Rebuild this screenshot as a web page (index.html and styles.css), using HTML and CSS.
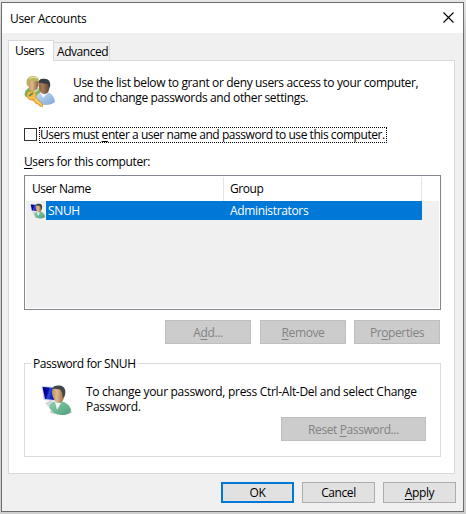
FILE: index.html
```
<!DOCTYPE html>
<html lang="en">
<head>
    <meta charset="UTF-8">
    <meta name="viewport" content="width=device-width, initial-scale=1.0">
    <title>User Accounts</title>
    <link rel="stylesheet" href="styles.css">
</head>
<body>
    <svg class="defs">
        <defs>
            <linearGradient id="skin" x1="0" x2="1"><stop offset="0" stop-color="#c08d5e"/><stop offset=".4" stop-color="#dfb98c"/><stop offset="1" stop-color="#87603c"/></linearGradient>
            <linearGradient id="skinDark" x1="0" x2="1"><stop offset="0" stop-color="#8a6347"/><stop offset=".4" stop-color="#a67c5a"/><stop offset="1" stop-color="#5d4231"/></linearGradient>
            <linearGradient id="green" x1="0" x2="1" y1="0" y2="1"><stop offset="0" stop-color="#8fd0b0"/><stop offset=".6" stop-color="#66b48f"/><stop offset="1" stop-color="#4a9e79"/></linearGradient>
            <linearGradient id="blue" x1="0" x2="1" y1="0" y2="1"><stop offset="0" stop-color="#c3dcf1"/><stop offset="1" stop-color="#7faadb"/></linearGradient>
            <linearGradient id="screen" x1="0" x2="1" y1="0" y2=".3"><stop offset="0" stop-color="#020290"/><stop offset=".45" stop-color="#0505a5"/><stop offset=".6" stop-color="#2b4bdd"/><stop offset="1" stop-color="#0510ad"/></linearGradient>
            <symbol id="userPc" viewBox="0 0 32 32">
                <ellipse cx="20" cy="28" rx="11" ry="2.5" fill="#c8cccc"/>
                <path d="M4 19l6-3 4 4-6 3z" fill="#d3d9d9"/>
                <path d="M.5 2l15 1v14L2.5 16z" fill="#c9d2df"/>
                <path d="M1.500 3l13 1v12L4 15z" fill="url(#screen)"/>
                <path d="M8 23c1-4 5-6 10-6 6 0 11 4 12 9 0 3-4 5-9 5s-11-3-13-8z" fill="url(#green)"/>
                <path d="M14 18l2 8 4-7z" fill="#f5f8f6"/>
                <path d="M11 8c0-4 3-6 6-6s7 3 6.500 8c-.5 6-2.500 9-5.500 9s-7-5-7-11z" fill="url(#skin)"/>
                <path d="M11 5c1-3 4-4 8-3.500 5 .5 7 6 4 12l-1.500-1c0-3-.5-5-2.500-7-3 0-5-1-8-.5z" fill="#414746"/>
            </symbol>
        </defs>
    </svg>

    <div class="window">
        <div class="titlebar">
            <span class="title">User Accounts</span>
            <svg class="close" viewBox="0 0 11 11"><path d="M.5.5l10 10M10.5.5l-10 10" stroke="#000" stroke-width="1.1"/></svg>
        </div>

        <div class="tabs">
            <div class="tab active">Users</div>
            <div class="tab">Advanced</div>
        </div>

        <div class="panel">
            <div class="intro">
                <svg class="icon" viewBox="0 0 32 32">
                    <path d="M.5 20c0-5 4-8 8-8l8 2v8H2z" fill="#7fb062"/>
                    <path d="M8 13l2 6 5-5z" fill="#d7e8c7"/>
                    <path d="M4 6c1-5 9-5 10 0 1 6-1 10-5 10S4 12 4 6z" fill="url(#skin)"/>
                    <path d="M3 11C1 4 5 1 9 1c5 0 6 3 6 7l-2-2c-3 1-5-1-7 0-1 2 0 4-3 5z" fill="#b8b45b"/>
                    <path d="M5 4c2-2 6-2 8-1" stroke="#e3dc94" stroke-width="1.5" fill="none"/>
                    <path d="M11 27c-1-7 4-10 10-10 6 0 9 4 10 10-4 4-15 4-20 0z" fill="url(#blue)"/>
                    <path d="M16 18l3 5 5-5z" fill="#eef4fa"/>
                    <path d="M14.5 9c0-4 2-5 5-5 5 0 6 3 6 7 0 5-2 8-5 8-4 0-6-5-6-10z" fill="url(#skinDark)"/>
                    <path d="M14.5 8c0-4 4-5 7-4 4 0 6 5 4 9l-1.500-4c-4 0-6-2-9.500-1z" fill="#343c45"/>
                    <g stroke="#c98a22" stroke-width=".7" fill="#f8bd48">
                        <path d="M10 21l8.500 8v2.500l-3-.5-1-2-2 0-5-5z"/>
                        <ellipse cx="7.5" cy="20.5" rx="4.700" ry="4.500"/>
                    </g>
                    <path d="M5 21l4-3" stroke="#678d42" stroke-width="2"/>
                    <path d="M10 22.500l7 7" stroke="#ffe38e" stroke-width="1"/>
                </svg>
                <p class="intro-text">Use the list below to grant or deny users access to your computer,<br>and to change passwords and other settings.</p>
            </div>

            <label class="check">
                <span class="box"></span>
                <span class="check-label">Users must <u>e</u>nter a user name and password to use this computer.</span>
            </label>

            <div class="list-label"><u>U</u>sers for this computer:</div>
            <div class="list">
                <div class="list-head">
                    <div class="col">User Name</div>
                    <div class="col">Group</div>
                </div>
                <div class="list-row">
                    <svg class="icon-small"><use href="#userPc"/></svg>
                    <div class="cell cell-name">SNUH</div>
                    <div class="cell cell-group">Administrators</div>
                </div>
            </div>

            <div class="actions">
                <button class="btn add" disabled>A<u>d</u>d...</button>
                <button class="btn" disabled><u>R</u>emove</button>
                <button class="btn" disabled>Pr<u>o</u>perties</button>
            </div>

            <div class="group">
                <div class="legend">Password for SNUH</div>
                <div class="group-body">
                    <svg class="icon"><use href="#userPc"/></svg>
                    <p class="group-text">To change your password, press Ctrl-Alt-Del and select Change<br>Password.</p>
                </div>
                <button class="btn reset" disabled>Reset <u>P</u>assword...</button>
            </div>
        </div>

        <div class="footer">
            <button class="btn default">OK</button>
            <button class="btn">Cancel</button>
            <button class="btn"><u>A</u>pply</button>
        </div>
    </div>
</body>
</html>
```
FILE: styles.css
```
* { box-sizing: border-box; }
body {
    margin: 0;
    padding: 2px 2px 2px 1px;
    width: 466px;
    height: 514px;
    overflow: hidden;
    background: linear-gradient(#e6e6e6, #cfcfcf 30px);
    color: #000;
    font-family: "Open Sans", "Noto Sans", sans-serif;
    font-size: 12px;
    letter-spacing: -0.3px;
    line-height: 15px;
    white-space: nowrap;
}
p { margin: 0; }
u { text-decoration: underline; text-underline-offset: 2px; text-decoration-thickness: 1px; text-decoration-skip-ink: none; }
svg { display: block; flex: none; }
.defs { width: 0; height: 0; position: absolute; }

.window { width: 463px; height: 510px; border: 1px solid #6b6e6e; background: #f0f0f0; }
.titlebar { height: 30px; padding: 0 9px 0 8px; display: flex; align-items: center; justify-content: space-between; background: #fff; }
.close { width: 11px; height: 11px; margin-top: -2px; }

.tabs { display: flex; align-items: flex-end; height: 28px; padding-left: 6px; margin-bottom: -1px; }
.tab { height: 19px; width: 56px; padding: 1px 0 0 4px; border: 1px solid #d9d9d9; border-left: 0; letter-spacing: -0.9px; }
.tab.active { width: 46px; height: 21px; padding: 2px 0 0 6px; border-left: 1px solid #d9d9d9; border-bottom: 0; background: #fff; z-index: 1; letter-spacing: -0.6px; }
.tab:not(.active) { letter-spacing: -0.45px; padding-left: 3px; }

.panel { width: 447px; height: 414px; margin-left: 6px; padding: 14px 13px 0 15px; border: 1px solid #d9d9d9; background: #fff; }
.intro { display: flex; height: 51px; }
.icon { width: 32px; height: 32px; }
.intro-text { margin-left: 17px; letter-spacing: -0.36px; }

.check { display: flex; align-items: center; height: 17px; }
.box { width: 13px; height: 13px; border: 1px solid #333; background: #fff; }
.check-label { height: 16px; width: 348px; margin-left: 2px; border: 1px dotted #000; line-height: 13px; letter-spacing: -0.45px; }
.list-label { margin-top: 11px; letter-spacing: -0.4px; }

.list { height: 135px; margin-top: 6px; padding: 1px; border: 1px solid #828790; background: #f0f0f0; box-shadow: inset 0 0 0 1px #fff; }
.list-head { display: flex; height: 24px; background: #fff; }
.col { width: 198px; padding-left: 6px; border-right: 1px solid #e5e5e5; line-height: 23px; letter-spacing: -0.45px; }
.list-row { display: flex; align-items: center; height: 19px; padding-left: 4px; }
.icon-small { width: 16px; height: 16px; }
.cell { height: 19px; line-height: 19px; padding-left: 2px; color: #fff; background: #0078d7; letter-spacing: -0.35px; }
.cell-name { width: 182px; }
.cell-group { width: 194px; }

.btn { width: 73px; height: 21px; padding: 0; border: 1px solid #adadad; background: #e1e1e1; color: #000; font: inherit; letter-spacing: -0.4px; }
.btn:disabled { width: 86px; height: 24px; border-color: #bfbfbf; background: #ccc; color: #838383; }
.btn.default { border: 2px solid #0078d7; }
.actions { display: flex; justify-content: flex-end; gap: 8px; margin-top: 10px; padding-right: 1px; }
.add { margin-right: 1px; }

.group { display: flex; flex-direction: column; height: 94px; margin-top: 19px; border: 1px solid #dcdcdc; }
.legend { width: 107px; margin: -8px 0 0 6px; padding-left: 2px; background: #fff; letter-spacing: -0.42px; }
.group-body { display: flex; height: 46px; padding: 13px 0 0 16px; }
.group-text { margin-left: 13px; }
.group .reset { width: 145px; margin-left: auto; margin-right: 14px; flex: none; }

.footer { display: flex; justify-content: flex-end; gap: 8px; padding: 8px 7px 0 0; }
```
